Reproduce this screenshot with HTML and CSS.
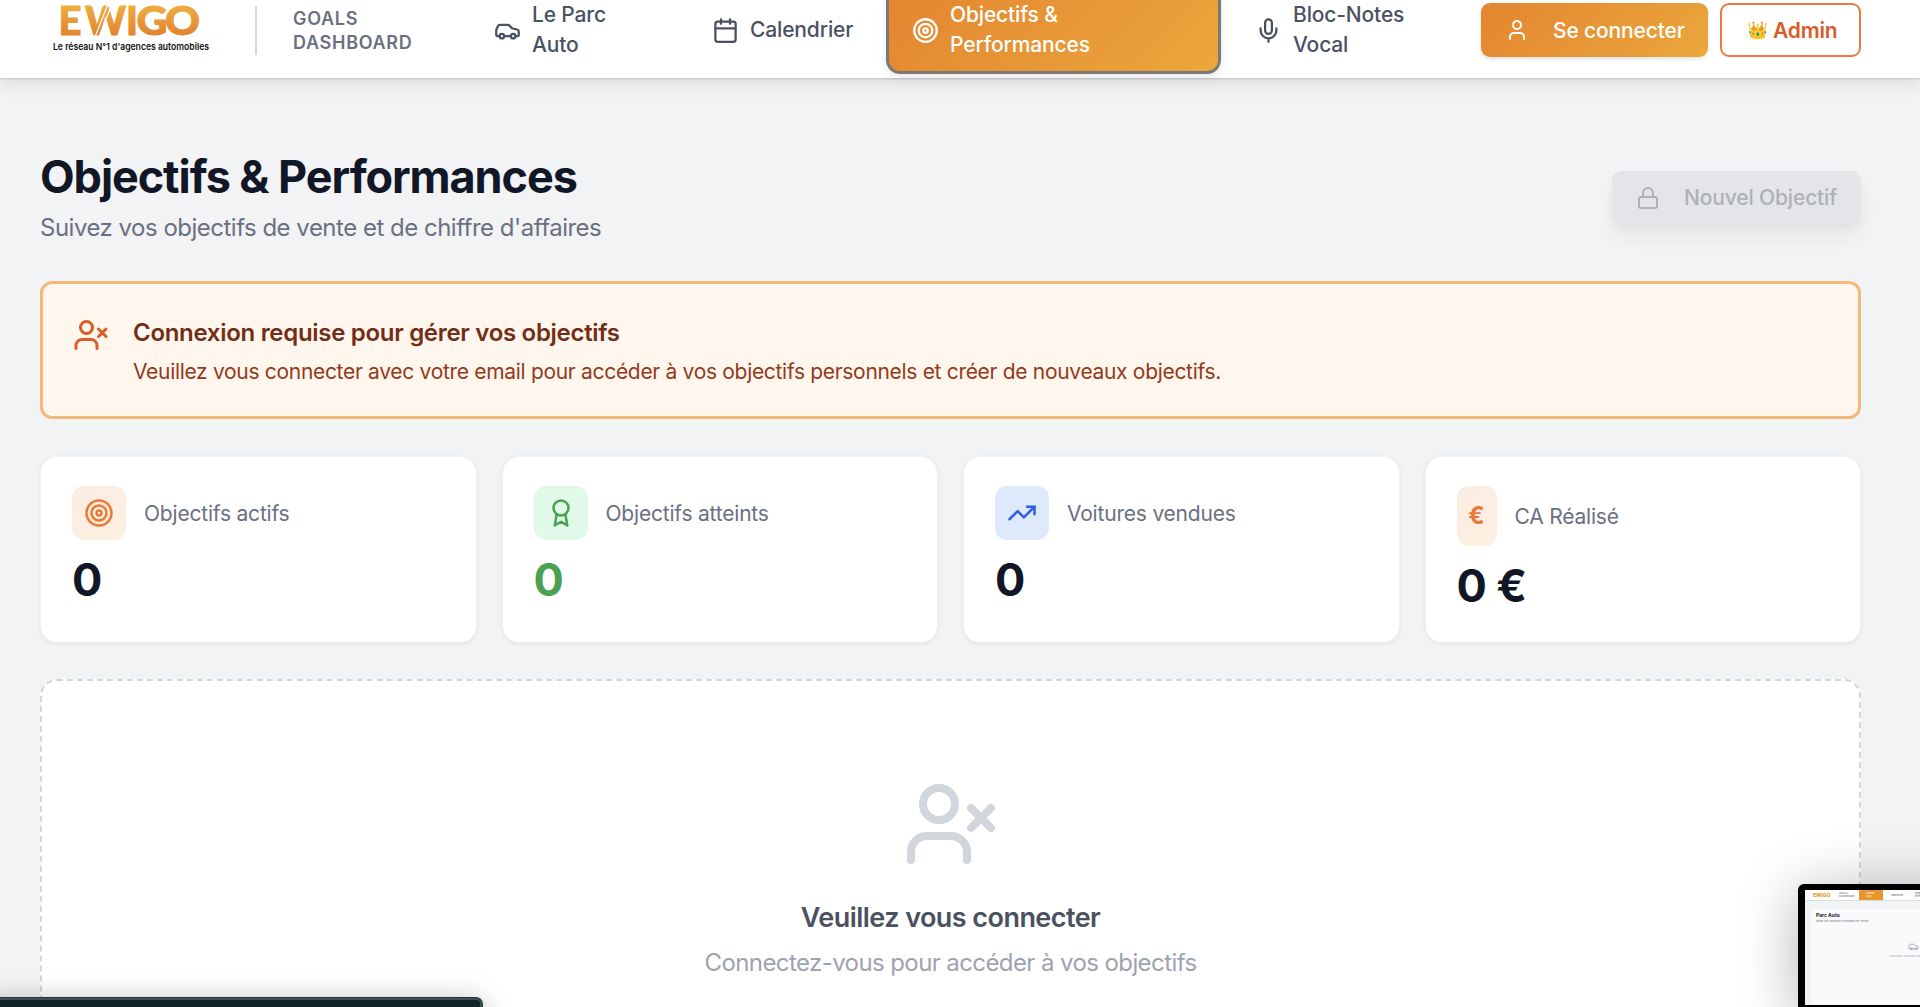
FILE: index.html
```html
<!DOCTYPE html>
<html lang="fr">
<head>
    <meta charset="UTF-8">
    <meta name="viewport" content="width=device-width, initial-scale=1.0">
    <title>Ewigo - Objectifs &amp; Performances</title>
    <link rel="stylesheet" href="styles.css">
</head>
<body>
    <header class="header">
        <svg class="logo" width="160" height="56" viewBox="0 0 160 56">
            <defs>
                <linearGradient id="gold" gradientUnits="userSpaceOnUse" x1="0" y1="4" x2="0" y2="36">
                    <stop offset="0" stop-color="#efb041"/>
                    <stop offset="1" stop-color="#e1822f"/>
                </linearGradient>
            </defs>
            <g class="logo-name" fill="url(#gold)" stroke="url(#gold)">
                <text x="5.500" y="35" textLength="23" lengthAdjust="spacingAndGlyphs">E</text>
                <text x="32" y="35" textLength="41" lengthAdjust="spacingAndGlyphs">W</text>
                <text x="73" y="35" textLength="12" lengthAdjust="spacingAndGlyphs">I</text>
                <text x="83.500" y="35" textLength="31" lengthAdjust="spacingAndGlyphs">G</text>
                <text x="112" y="35" textLength="35" lengthAdjust="spacingAndGlyphs">O</text>
            </g>
            <path d="M42 37 55 4M46 37 59 4" stroke="#fff" stroke-width="1.200"/>
            <text class="logo-tag" x="0" y="50" textLength="156" lengthAdjust="spacingAndGlyphs">Le réseau N°1 d'agences automobiles</text>
        </svg>
        <div class="brand">GOALS<br>DASHBOARD</div>

        <nav class="nav">
            <a class="nav-item nav-parc">
                <svg class="icon" width="27" height="27" viewBox="0 0 24 24"><path d="M19 17h2c.6 0 1-.4 1-1v-3c0-.9-.7-1.700-1.500-1.900C18.700 10.600 16 10 16 10s-1.300-1.400-2.200-2.300c-.5-.4-1.100-.7-1.800-.7H5c-.6 0-1.100.4-1.400.9l-1.400 2.900A3.700 3.700 0 0 0 2 12v4c0 .6.4 1 1 1h2"/><circle cx="7" cy="17" r="2"/><path d="M9 17h6"/><circle cx="17" cy="17" r="2"/></svg>
                <span>Le Parc<br>Auto</span>
            </a>
            <a class="nav-item nav-calendar">
                <svg class="icon" width="27" height="27" viewBox="0 0 24 24"><path d="M8 2v4M16 2v4M3 10h18"/><rect x="3" y="4" width="18" height="18" rx="2"/></svg>
                <span>Calendrier</span>
            </a>
            <a class="nav-item nav-active">
                <svg class="icon" width="27" height="27" viewBox="0 0 24 24"><circle cx="12" cy="12" r="10"/><circle cx="12" cy="12" r="6"/><circle cx="12" cy="12" r="2"/></svg>
                <span>Objectifs &amp;<br>Performances</span>
            </a>
            <a class="nav-item">
                <svg class="icon" width="27" height="27" viewBox="0 0 24 24"><path d="M12 2a3 3 0 0 0-3 3v7a3 3 0 0 0 6 0V5a3 3 0 0 0-3-3Z"/><path d="M19 10v2a7 7 0 0 1-14 0v-2M12 19v3"/></svg>
                <span>Bloc-Notes<br>Vocal</span>
            </a>
        </nav>

        <div class="actions">
            <button class="btn btn-login">
                <svg class="icon" width="24" height="24" viewBox="0 0 24 24"><path d="M19 21v-2a4 4 0 0 0-4-4H9a4 4 0 0 0-4 4v2"/><circle cx="12" cy="7" r="4"/></svg>
                Se connecter
            </button>
            <button class="btn btn-admin"><span class="crown">👑</span>Admin</button>
        </div>
    </header>

    <main class="page">
        <div class="page-head">
            <div>
                <h1>Objectifs &amp; Performances</h1>
                <p class="subtitle">Suivez vos objectifs de vente et de chiffre d'affaires</p>
            </div>
            <button class="btn btn-new" disabled>
                <svg class="icon" width="24" height="24" viewBox="0 0 24 24"><rect x="3" y="11" width="18" height="11" rx="2"/><path d="M7 11V7a5 5 0 0 1 10 0v4"/></svg>
                Nouvel Objectif
            </button>
        </div>

        <section class="alert">
            <svg class="icon" width="36" height="36" viewBox="0 0 24 24"><path d="M16 21v-2a4 4 0 0 0-4-4H6a4 4 0 0 0-4 4v2"/><circle cx="9" cy="7" r="4"/><path d="m17 8 5 5M22 8l-5 5"/></svg>
            <div>
                <h2>Connexion requise pour gérer vos objectifs</h2>
                <p>Veuillez vous connecter avec votre email pour accéder à vos objectifs personnels et créer de nouveaux objectifs.</p>
            </div>
        </section>

        <section class="stats">
            <div class="card">
                <div class="card-head">
                    <span class="badge badge-orange"><svg class="icon" width="30" height="30" viewBox="0 0 24 24"><circle cx="12" cy="12" r="10"/><circle cx="12" cy="12" r="6"/><circle cx="12" cy="12" r="2"/></svg></span>
                    <span class="label">Objectifs actifs</span>
                </div>
                <div class="value">0</div>
            </div>
            <div class="card">
                <div class="card-head">
                    <span class="badge badge-green"><svg class="icon" width="30" height="30" viewBox="0 0 24 24"><circle cx="12" cy="8" r="6"/><path d="M15.477 12.890 17 22l-5-3-5 3 1.523-9.110"/></svg></span>
                    <span class="label">Objectifs atteints</span>
                </div>
                <div class="value value-green">0</div>
            </div>
            <div class="card">
                <div class="card-head">
                    <span class="badge badge-blue"><svg class="icon" width="30" height="30" viewBox="0 0 24 24"><path d="m22 7-8.500 8.500-5-5L2 17"/><path d="M16 7h6v6"/></svg></span>
                    <span class="label">Voitures vendues</span>
                </div>
                <div class="value">0</div>
            </div>
            <div class="card">
                <div class="card-head">
                    <span class="badge badge-orange badge-euro">€</span>
                    <span class="label">CA Réalisé</span>
                </div>
                <div class="value">0 €</div>
            </div>
        </section>

        <section class="empty">
            <svg class="icon" width="96" height="96" viewBox="0 0 24 24"><path d="M16 21v-2a4 4 0 0 0-4-4H6a4 4 0 0 0-4 4v2"/><circle cx="9" cy="7" r="4"/><path d="m17 8 5 5M22 8l-5 5"/></svg>
            <h3>Veuillez vous connecter</h3>
            <p>Connectez-vous pour accéder à vos objectifs</p>
        </section>
    </main>

    <!-- floating windows over the page -->
    <div class="dock"></div>
    <div class="preview">
        <div class="preview-bar">
            <span class="preview-logo">EWIGO</span>
            <span class="preview-brand">GOALS<br>DASHBOARD</span>
            <span class="preview-tab">Le Parc<br>Auto</span>
            <span class="preview-link">Calendrier</span>
            <span class="preview-link">Objectifs &amp;<br>Performances</span>
        </div>
        <div class="preview-body">
            <div class="preview-title">Parc Auto</div>
            <div class="preview-text">Gérez vos véhicules et préparez les ventes</div>
            <div class="preview-empty">
                <svg class="icon" width="11" height="11" viewBox="0 0 24 24"><path d="M19 17h2c.6 0 1-.4 1-1v-3c0-.9-.7-1.700-1.500-1.900C18.700 10.600 16 10 16 10s-1.300-1.400-2.200-2.300c-.5-.4-1.100-.7-1.800-.7H5c-.6 0-1.100.4-1.400.9l-1.400 2.900A3.700 3.700 0 0 0 2 12v4c0 .6.4 1 1 1h2"/><circle cx="7" cy="17" r="2"/><path d="M9 17h6"/><circle cx="17" cy="17" r="2"/></svg>
                <div>Connectez-vous pour voir vos véhicules</div>
            </div>
        </div>
    </div>
</body>
</html>
```
FILE: styles.css
```css
* {
    box-sizing: border-box;
}
body {
    margin: 0;
    height: 1007px;
    overflow: hidden;
    background: #f2f3f5;
    color: #111726;
    font-family: Inter, "Liberation Sans", sans-serif;
    position: relative;
}
h1, h2, h3, p {
    margin: 0;
}
.icon {
    fill: none;
    stroke: currentColor;
    stroke-width: 2;
    stroke-linecap: round;
    stroke-linejoin: round;
    flex-shrink: 0;
}

/* header is scrolled slightly past the top edge */
.header {
    display: flex;
    align-items: center;
    height: 96px;
    margin-top: -18px;
    padding: 0 59px 0 53px;
    background: #fff;
    box-shadow: 0 1px 2px rgba(0,0,0,0.15), 0 6px 16px rgba(0,0,0,0.09);
}
.logo {
    margin-top: -4px;
    flex-shrink: 0;
    overflow: visible;
}
.logo-name {
    font-family: Lato, sans-serif;
    font-size: 40px;
    font-weight: 900;
    stroke-width: 1;
}
.logo-tag {
    font-size: 9.5px;
    font-weight: 600;
    fill: #111;
}
.brand {
    margin-left: 42px;
    padding: 1px 0 0 36px;
    width: 213px;
    border-left: 2px solid #d4d6dc;
    color: #6b7080;
    font-size: 18px;
    font-weight: 600;
    line-height: 24px;
    letter-spacing: 0.7px;
}
.nav {
    display: flex;
    align-items: center;
    gap: 8px;
    color: #4a5161;
    font-size: 21px;
    font-weight: 500;
    line-height: 30px;
    letter-spacing: -0.15px;
}
.nav-item {
    display: flex;
    align-items: center;
    gap: 11px;
    height: 88px;
    padding: 0 26px;
}
.nav-parc {
    width: 210px;
}
.nav-calendar {
    width: 192px;
}
.nav-active {
    width: 335px;
    border: 3px solid #7b7976;
    border-radius: 14px;
    padding: 0 23px;
    background: linear-gradient(135deg, #e38530, #eba73c);
    color: #fff;
    box-shadow: 0 3px 8px rgba(0,0,0,0.1);
}
.actions {
    display: flex;
    gap: 12px;
    margin-left: auto;
}
.btn {
    display: flex;
    align-items: center;
    height: 54px;
    border: none;
    border-radius: 9px;
    font-family: inherit;
    font-size: 21px;
    font-weight: 500;
    letter-spacing: -0.15px;
    white-space: nowrap;
}
.btn-login {
    width: 227px;
    gap: 24px;
    padding: 0 24px;
    background: linear-gradient(135deg, #e38530, #eba73c);
    color: #fff;
    box-shadow: 0 2px 4px rgba(0,0,0,0.12);
}
.btn-admin {
    width: 141px;
    gap: 5px;
    padding: 0 0 0 24px;
    border: 2px solid #ea7a3c;
    background: #fff;
    color: #d95b27;
    font-weight: 600;
}
.crown {
    width: 22px;
    font-size: 17px;
}

.page {
    padding: 74px 59px 0 40px;
}
.page-head {
    display: flex;
    align-items: center;
    justify-content: space-between;
    height: 94px;
}
h1 {
    font-size: 45px;
    font-weight: 700;
    line-height: 50px;
    letter-spacing: -1.08px;
}
.subtitle {
    margin-top: 8px;
    color: #6b7080;
    font-size: 24px;
    line-height: 36px;
    letter-spacing: -0.5px;
}
.btn-new {
    gap: 24px;
    margin-bottom: 3px;
    padding: 0 24px;
    width: 249px;
    background: #e4e5e9;
    color: #aeb1b9;
    box-shadow: 0 12px 18px rgba(0,0,0,0.05), 0 3px 6px rgba(0,0,0,0.03);
}
.alert {
    display: flex;
    gap: 24px;
    height: 138px;
    margin-top: 35px;
    padding: 33px 30px;
    border: 3px solid #f3b978;
    border-radius: 12px;
    background: #fff6ed;
    color: #dc5c27;
}
.alert h2 {
    margin-top: -2px;
    color: #732d16;
    font-size: 24px;
    font-weight: 600;
    line-height: 36px;
    letter-spacing: -0.3px;
}
.alert p {
    margin-top: 6px;
    color: #923a1c;
    font-size: 21px;
    line-height: 30px;
    letter-spacing: -0.31px;
}

.stats {
    display: grid;
    grid-template-columns: repeat(4, 1fr);
    gap: 25px;
    margin-top: 37px;
}
.card {
    height: 187px;
    padding: 29px 31px;
    border: 1px solid #f0f1f3;
    border-radius: 17px;
    background: #fff;
    box-shadow: 0 1px 4px rgba(0,0,0,0.07);
}
.card-head {
    display: flex;
    align-items: center;
    gap: 18px;
}
.badge {
    display: flex;
    padding: 12px;
    border-radius: 12px;
}
.badge-orange {
    background: linear-gradient(135deg, #fbece1, #fcf0e2);
    color: #e97b34;
}
.badge-green {
    background: #e1f9e8;
    color: #4ba152;
}
.badge-blue {
    background: #dee9fc;
    color: #305fe6;
}
.badge-euro {
    font-size: 24px;
    font-weight: 700;
    line-height: 36px;
    width: 40px;
    justify-content: center;
}
.label {
    color: #6b7080;
    font-size: 21px;
    letter-spacing: -0.2px;
}
.value {
    margin-top: 13px;
    font-size: 45px;
    font-weight: 700;
    line-height: 54px;
    letter-spacing: -0.6px;
}
.value-green {
    color: #4ba152;
}

.empty {
    display: flex;
    flex-direction: column;
    align-items: center;
    height: 420px;
    margin-top: 36px;
    padding-top: 95px;
    border: 2px dashed #d4d6dc;
    border-radius: 17px;
    background: #fff;
    color: #d1d5dc;
}
.empty h3 {
    margin-top: 26px;
    color: #4a5161;
    font-size: 27px;
    font-weight: 600;
    line-height: 40px;
    letter-spacing: -0.55px;
}
.empty p {
    margin-top: 7px;
    color: #9ea3af;
    font-size: 24px;
    line-height: 36px;
    letter-spacing: -0.59px;
}

.dock {
    position: absolute;
    left: -20px;
    top: 998px;
    width: 502px;
    height: 60px;
    border: 2px solid #3f4e52;
    border-radius: 6px;
    background: #12252b;
    box-shadow: 0 0 0 1px #2c3436, 0 6px 30px rgba(0,0,0,0.35);
}
.preview {
    position: absolute;
    left: 1798px;
    top: 884px;
    width: 300px;
    height: 128px;
    padding-top: 6px;
    border-left: 7px solid #000;
    border-radius: 6px 0 0 0;
    background: #000;
    box-shadow: 0 8px 60px rgba(0,0,0,0.3);
    overflow: hidden;
}
.preview-bar {
    display: flex;
    align-items: center;
    height: 11px;
    padding-left: 8px;
    background: #fff;
    border-bottom: 1px solid #dcdde0;
    font-size: 2.5px;
    line-height: 3px;
    color: #4a5161;
}
.preview-logo {
    width: 26px;
    color: #e9962f;
    font-size: 5px;
    font-weight: 800;
}
.preview-brand {
    width: 20px;
}
.preview-tab {
    width: 24px;
    height: 10px;
    padding: 2px 0 0 7px;
    background: #e9962f;
    color: #fff;
}
.preview-link {
    width: 24px;
    padding-left: 8px;
}
.preview-body {
    height: 104px;
    padding: 3px 0 0 5px;
    border-top: 8px solid #f2f3f5;
    border-left: 6px solid #f2f3f5;
    background: #f9fafb;
    white-space: nowrap;
}
.preview-title {
    color: #111726;
    font-size: 5px;
    font-weight: 700;
    line-height: 7px;
}
.preview-text {
    color: #6b7080;
    font-size: 2.6px;
    line-height: 4px;
}
.preview-empty {
    width: 180px;
    padding: 18px 0 0 73px;
    color: #9ea3af;
    font-size: 2.6px;
    line-height: 5px;
}
.preview-empty .icon {
    display: block;
    margin: 0 0 2px 19px;
}
```
